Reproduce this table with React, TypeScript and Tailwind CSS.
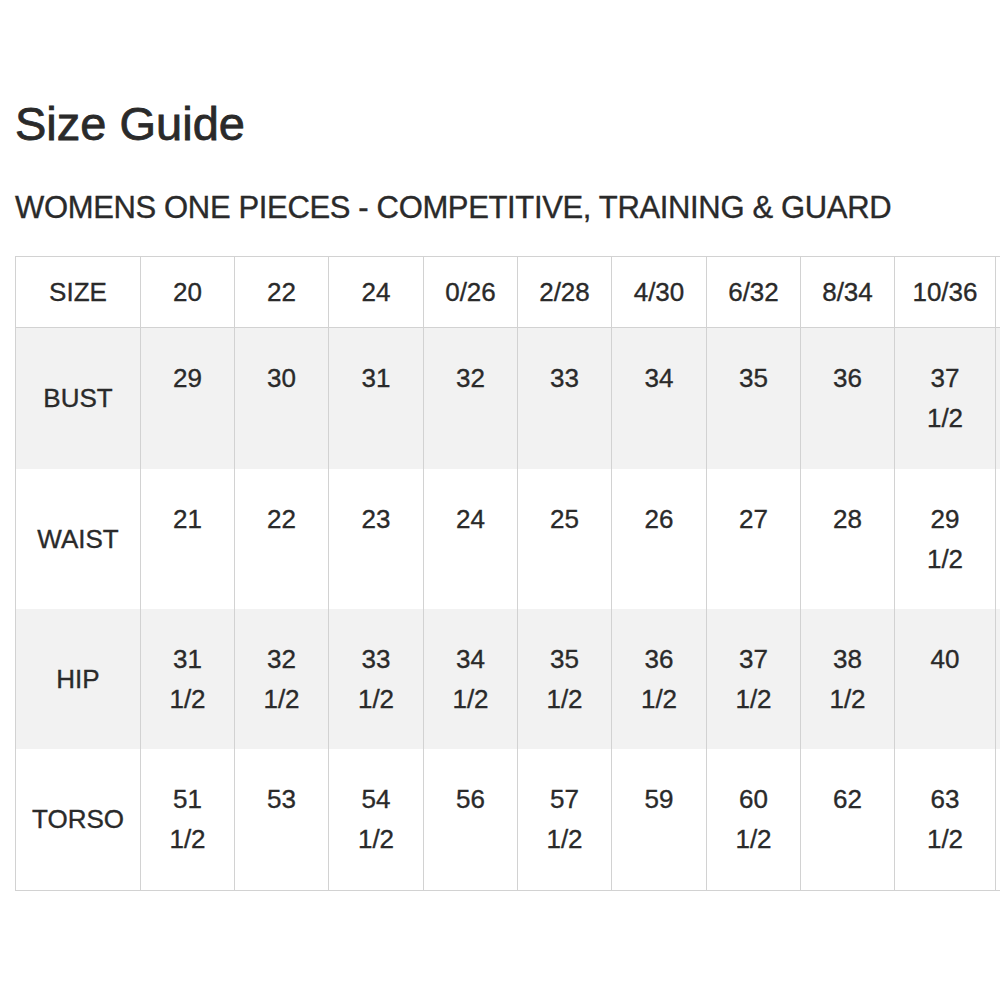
import React from "react";

const sizes = ["20", "22", "24", "0/26", "2/28", "4/30", "6/32", "8/34", "10/36"];

const rows: { label: string; values: string[][]; shaded: boolean; pb: string }[] = [
  {
    label: "BUST",
    shaded: true,
    pb: "pb-[31px]",
    values: [["29"], ["30"], ["31"], ["32"], ["33"], ["34"], ["35"], ["36"], ["37", "1/2"]],
  },
  {
    label: "WAIST",
    shaded: false,
    pb: "pb-[30px]",
    values: [["21"], ["22"], ["23"], ["24"], ["25"], ["26"], ["27"], ["28"], ["29", "1/2"]],
  },
  {
    label: "HIP",
    shaded: true,
    pb: "pb-[30px]",
    values: [
      ["31", "1/2"],
      ["32", "1/2"],
      ["33", "1/2"],
      ["34", "1/2"],
      ["35", "1/2"],
      ["36", "1/2"],
      ["37", "1/2"],
      ["38", "1/2"],
      ["40"],
    ],
  },
  {
    label: "TORSO",
    shaded: false,
    pb: "pb-[31px]",
    values: [
      ["51", "1/2"],
      ["53"],
      ["54", "1/2"],
      ["56"],
      ["57", "1/2"],
      ["59"],
      ["60", "1/2"],
      ["62"],
      ["63", "1/2"],
    ],
  },
];

const colWidths = [94, 94, 95, 94, 94, 95, 94, 94, 101];

export default function App() {
  return (
    <div className="min-h-screen w-full overflow-hidden bg-white font-['Liberation_Sans',Arial,sans-serif] text-[#2a2a2a] [-webkit-text-stroke:0.35px_#2a2a2a]">
      <div className="pl-[15px] pt-[101px]">
        <h1 className="text-[47px] leading-[46px] font-normal [-webkit-text-stroke:0.8px_#2a2a2a]">Size Guide</h1>
        <h2 className="mt-[41px] whitespace-nowrap text-[31px] leading-[40px] tracking-[-0.35px]">
          WOMENS ONE PIECES - COMPETITIVE, TRAINING &amp; GUARD
        </h2>
        <table className="mt-[28px] w-[1081px] max-w-none table-fixed border-collapse text-center text-[26px] leading-[40px]">
          <colgroup>
            <col className="w-[125px]" />
            {colWidths.map((w, i) => (
              <col key={i} style={{ width: w }} />
            ))}
            <col className="w-[101px]" />
          </colgroup>
          <thead>
            <tr>
              <th className="border border-[#d2d2d2] py-[15px] font-normal">SIZE</th>
              {sizes.map((s) => (
                <th key={s} className="whitespace-nowrap border border-[#d2d2d2] py-[15px] font-normal">
                  {s}
                </th>
              ))}
              <th className="border border-[#d2d2d2] py-[15px] font-normal" />
            </tr>
          </thead>
          <tbody>
            {rows.map((row) => (
              <tr key={row.label} className={row.shaded ? "bg-[#f2f2f2]" : "bg-white"}>
                <td className={`border-x border-[#d2d2d2] pt-[30px] ${row.pb} align-middle`}>{row.label}</td>
                {row.values.map((v, i) => (
                  <td key={i} className={`border-x border-[#d2d2d2] pt-[30px] ${row.pb} align-top`}>
                    {v.map((line) => (
                      <div key={line}>{line}</div>
                    ))}
                  </td>
                ))}
                <td className={`border-x border-[#d2d2d2] pt-[30px] ${row.pb}`} />
              </tr>
            ))}
            <tr>
              <td colSpan={11} className="h-0 border-t border-[#d2d2d2] p-0" />
            </tr>
          </tbody>
        </table>
      </div>
    </div>
  );
}
